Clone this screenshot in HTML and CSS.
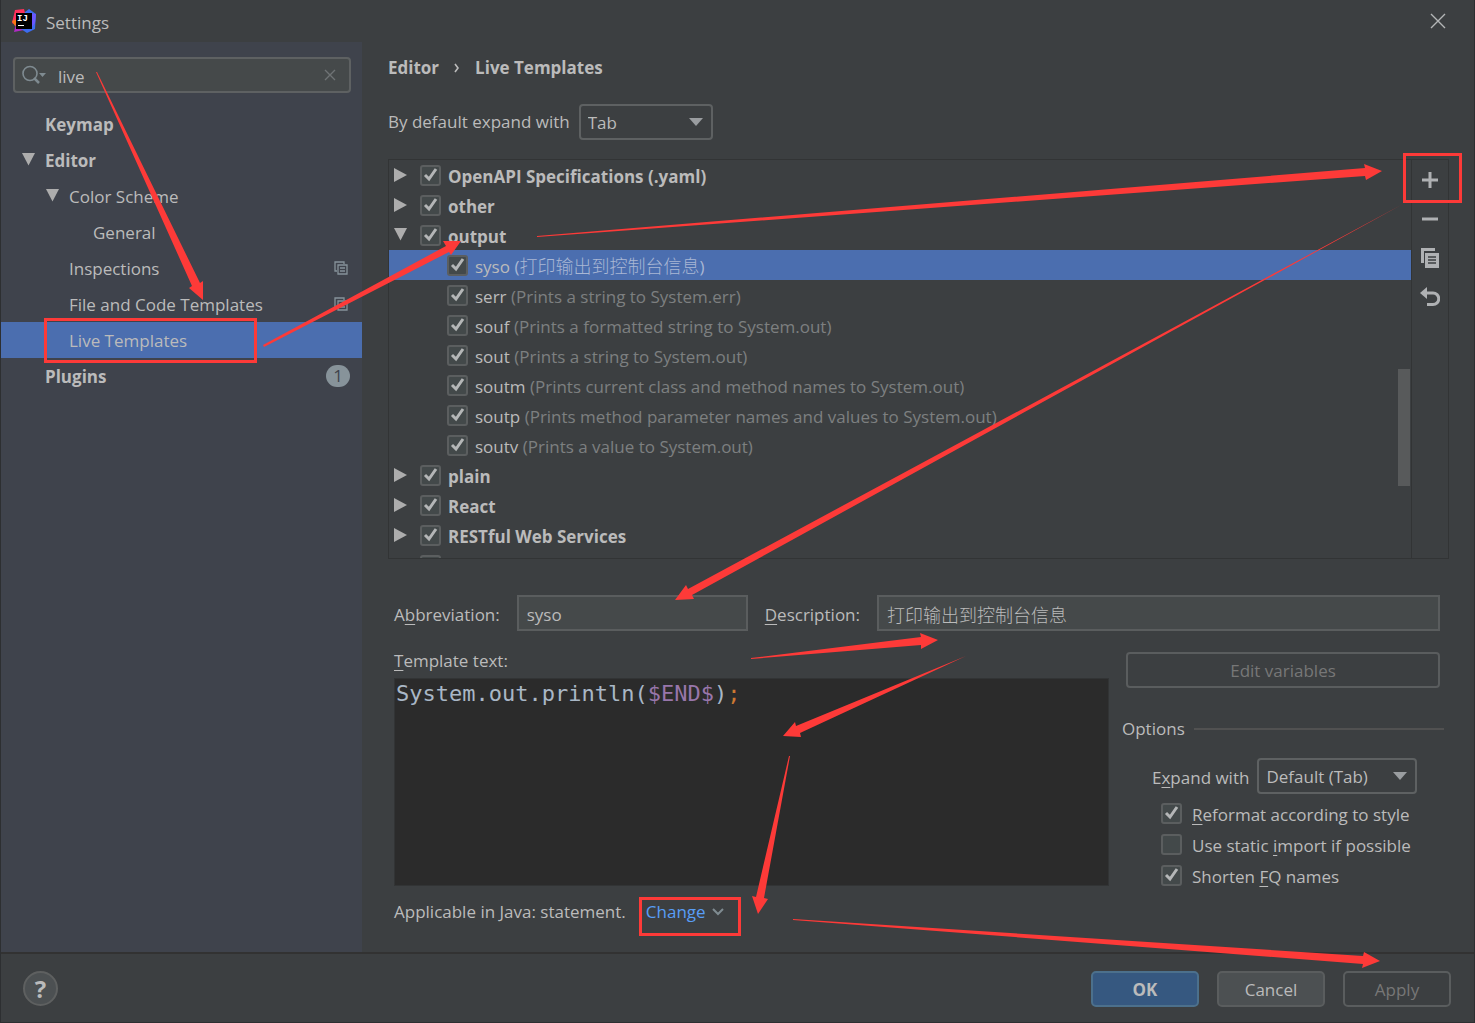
FILE: index.html
```html
<!DOCTYPE html>

<html lang="en">

<head>
  <meta charset="utf-8">
  <title>Settings</title>
  <link rel="stylesheet" href="styles.css">
</head>

<body>

  <div class="window">

    <header class="titlebar">
      <svg class="logo" width="24" height="24" viewBox="0 0 24 24">
        <polygon points="0,14 3,1 12,0 14,8 8,18" fill="#fe315d" />
        <polygon points="0,12 8,9 8,19 3,17" fill="#f97a12" />
        <polygon points="2,23 4,15 14,18 12,21" fill="#b02bc4" />
        <polygon points="13,3 17,0 24,5 23,20 15,24 9,20" fill="#3b6cf0" />
        <polygon points="17,4 24,5 23,14 20,18" fill="#6b57ff" />
        <rect x="4" y="4" width="16" height="16" fill="#000" />
        <text x="5" y="12" class="logo-text">IJ</text>
        <rect x="6" y="16" width="6" height="1" fill="#fff" />
      </svg>
      <h1>Settings</h1>
      <button class="close" aria-label="Close">
        <svg width="16" height="16" viewBox="0 0 16 16"><path d="M1 1L15 15M15 1L1 15" stroke="#b4b6b7" stroke-width="1.4" /></svg>
      </button>
    </header>

    <div class="content">

      <nav class="sidebar">
        <div class="search">
          <svg width="26" height="20" viewBox="0 0 26 20">
            <circle cx="8" cy="8.500" r="7" fill="none" stroke="#7f8b91" stroke-width="1.600" />
            <path d="M12 13L17 18" stroke="#7f8b91" stroke-width="2.500" />
            <path d="M17 8H24L20.500 12Z" fill="#7f8b91" />
          </svg>
          <input type="text" value="live" aria-label="Search settings">
          <button aria-label="Clear">
            <svg width="12" height="12" viewBox="0 0 12 12"><path d="M1 1L11 11M11 1L1 11" stroke="#6f7375" stroke-width="1.400" /></svg>
          </button>
        </div>

        <ul class="tree">
          <li><a href="#keymap" class="bold">Keymap</a></li>
          <li><span class="arrow open"></span><a href="#editor" class="bold">Editor</a></li>
          <li class="level2"><span class="arrow open"></span><a href="#colors">Color Scheme</a></li>
          <li class="level3"><a href="#general">General</a></li>
          <li class="level2"><a href="#inspections">Inspections</a>
            <svg class="scope" width="14" height="14" viewBox="0 0 14 14"><path d="M3 10H1V1H10V3M4 4H13V13H4ZM6 7H11M6 10H11" fill="none" stroke="#87939a" stroke-width="1.300" /></svg>
          </li>
          <li class="level2"><a href="#file-templates">File and Code Templates</a>
            <svg class="scope" width="14" height="14" viewBox="0 0 14 14"><path d="M3 10H1V1H10V3M4 4H13V13H4ZM6 7H11M6 10H11" fill="none" stroke="#87939a" stroke-width="1.300" /></svg>
          </li>
          <li class="level2 selected"><a href="#live-templates">Live Templates</a></li>
          <li><a href="#plugins" class="bold">Plugins</a><span class="badge">1</span></li>
        </ul>
      </nav>

      <main class="main">
        <h2 class="breadcrumb">
          Editor
          <svg width="6" height="10" viewBox="0 0 6 10"><path d="M1 1L4 5L1 9" fill="none" stroke="#bbb" stroke-width="1.600" /></svg>
          Live Templates
        </h2>

        <div class="expand">
          <label for="expand">By default expand with</label>
          <select id="expand">
            <option>Tab</option>
            <option>Enter</option>
            <option>Space</option>
          </select>
        </div>

        <div class="templates">
          <div class="list">
            <div class="row"><span class="arrow"></span><input type="checkbox" id="openapi" checked><label for="openapi">OpenAPI Specifications (.yaml)</label></div>
            <div class="row"><span class="arrow"></span><input type="checkbox" id="other" checked><label for="other">other</label></div>
            <div class="row"><span class="arrow open"></span><input type="checkbox" id="output" checked><label for="output">output</label></div>
            <div class="row child selected"><input type="checkbox" id="syso" checked><label for="syso">syso <span class="hint">(<span class="cjk">打印输出到控制台信息</span>)</span></label></div>
            <div class="row child"><input type="checkbox" id="serr" checked><label for="serr">serr <span class="hint">(Prints a string to System.err)</span></label></div>
            <div class="row child"><input type="checkbox" id="souf" checked><label for="souf">souf <span class="hint">(Prints a formatted string to System.out)</span></label></div>
            <div class="row child"><input type="checkbox" id="sout" checked><label for="sout">sout <span class="hint">(Prints a string to System.out)</span></label></div>
            <div class="row child"><input type="checkbox" id="soutm" checked><label for="soutm">soutm <span class="hint">(Prints current class and method names to System.out)</span></label></div>
            <div class="row child"><input type="checkbox" id="soutp" checked><label for="soutp">soutp <span class="hint">(Prints method parameter names and values to System.out)</span></label></div>
            <div class="row child"><input type="checkbox" id="soutv" checked><label for="soutv">soutv <span class="hint">(Prints a value to System.out)</span></label></div>
            <div class="row"><span class="arrow"></span><input type="checkbox" id="plain" checked><label for="plain">plain</label></div>
            <div class="row"><span class="arrow"></span><input type="checkbox" id="react" checked><label for="react">React</label></div>
            <div class="row"><span class="arrow"></span><input type="checkbox" id="restful" checked><label for="restful">RESTful Web Services</label></div>
            <div class="row"><span class="arrow"></span><input type="checkbox" aria-label="Next group" checked></div>
            <div class="thumb"></div>
          </div>
          <div class="tools">
            <button aria-label="Add"><svg width="20" height="20" viewBox="0 0 20 20"><path d="M10 2V18M2 10H18" stroke="#afb1b3" stroke-width="3" /></svg></button>
            <button aria-label="Remove"><svg width="20" height="20" viewBox="0 0 20 20"><path d="M2 10H18" stroke="#afb1b3" stroke-width="3" /></svg></button>
            <button aria-label="Duplicate"><svg width="20" height="20" viewBox="0 0 20 20"><path d="M1 0H15V3H4V15H1Z" fill="#afb1b3" /><path d="M5 5H19V20H5Z" fill="#afb1b3" /><path d="M8 9H16M8 12H16M8 15H16" stroke="#3c3f41" stroke-width="1.300" /></svg></button>
            <button aria-label="Revert"><svg width="20" height="20" viewBox="0 0 20 20"><path d="M0 6L7 0V12Z" fill="#afb1b3" /><path d="M6 6H13A5.500 5.500 0 0 1 13 17.500H7" fill="none" stroke="#afb1b3" stroke-width="3" /></svg></button>
          </div>
        </div>

        <form class="details">
          <div class="fields">
            <label for="abbr">A<u>b</u>breviation:</label>
            <input type="text" id="abbr" class="abbr" value="syso">
            <label for="desc"><u>D</u>escription:</label>
            <input type="text" id="desc" class="desc" value="打印输出到控制台信息">
          </div>

          <div class="columns">
            <div class="template">
              <span id="text-label"><u>T</u>emplate text:</span>
              <div class="code" contenteditable="true" role="textbox" aria-labelledby="text-label">System.out.println(<span class="var">$END$</span>)<span class="semi">;</span></div>
              <div class="context">
                <span>Applicable in Java: statement.</span>
                <a href="#change">Change
                  <svg width="12" height="8" viewBox="0 0 12 8"><path d="M1 1L6 6L11 1" fill="none" stroke="#7f8b91" stroke-width="2" /></svg></a>
              </div>
            </div>

            <div class="side">
              <button type="button" class="variables" disabled>Edit variables</button>
              <fieldset class="options">
                <legend>Options</legend>
                <div class="option expand-with">
                  <label for="key">E<u>x</u>pand with</label>
                  <select id="key">
                    <option>Default (Tab)</option>
                  </select>
                </div>
                <div class="option"><input type="checkbox" id="reformat" checked><label for="reformat"><u>R</u>eformat according to style</label></div>
                <div class="option"><input type="checkbox" id="static"><label for="static">Use static <u>i</u>mport if possible</label></div>
                <div class="option"><input type="checkbox" id="fq" checked><label for="fq">Shorten <u>F</u>Q names</label></div>
              </fieldset>
            </div>
          </div>
        </form>
      </main>
    </div>

    <footer class="footer">
      <button class="help" aria-label="Help">?</button>
      <button class="action primary">OK</button>
      <button class="action">Cancel</button>
      <button class="action" disabled>Apply</button>
    </footer>

    <!-- red arrows and boxes showing the order of steps -->
    <svg class="marks" viewBox="0 0 1475 1023" preserveAspectRatio="none">
      <g fill="#fd3a38">
        <polygon points="96,72 192,286 189,288 203,300 203,281 200,283 97,72" />
        <polygon points="263,345 446,246 443,241 461,241 451,255 449,252 264,347" />
        <polygon points="537,236 1365,168 1364,164 1382,171 1366,180 1365,176 537,237" />
        <polygon points="1403,204 688,589 686,585 675,600 694,599 692,595" />
        <polygon points="751,658 921,637 920,633 938,640 921,649 921,645 751,659" />
        <polygon points="966,656 796,726 795,722 783,736 801,737 800,733" />
        <polygon points="789,756 756,897 752,896 758,914 768,899 764,898 790,756" />
        <polygon points="793,919 1363,956 1364,952 1380,961 1362,968 1363,964 793,920" />
      </g>
      <g fill="none" stroke="#fd3a38" stroke-width="3">
        <rect x="45.500" y="319.500" width="210" height="42" />
        <rect x="1404.500" y="154.500" width="56" height="47" />
        <rect x="640.500" y="898.500" width="99" height="36" />
      </g>
    </svg>
  </div>

</body>

</html>
```

FILE: styles.css
```css
* {
  box-sizing: border-box;
}

body {
  margin: 0;
  background-color: #3c3f41;
  color: #bbbbbb;
  font-family: "Open Sans", "Noto Sans CJK SC", sans-serif;
  font-size: 17px;
  line-height: 24px;
}

h1,
h2,
ul,
fieldset,
legend {
  margin: 0;
  padding: 0;
}

a {
  color: inherit;
  text-decoration: none;
}

u {
  text-underline-offset: 3px;
}

svg {
  display: block;
  flex: none;
}

button,
input,
select {
  margin: 0;
  color: inherit;
  font: inherit;
}

button {
  padding: 0;
  border: 0;
  background: none;
}

input[type="text"] {
  height: 36px;
  padding: 2px 8px 0;
  border: 2px solid #5a5d5e;
  background-color: #45494a;
  outline: 0;
}

input[type="checkbox"] {
  appearance: none;
  flex: none;
  width: 21px;
  height: 21px;
  border: 2px solid #5b5e5f;
  border-radius: 3px;
  background-color: #43494a;
}

input[type="checkbox"]:checked {
  background-image: url("data:image/svg+xml,%3Csvg xmlns='http://www.w3.org/2000/svg' viewBox='0 0 17 17'%3E%3Cpath d='M3 8L7 12L14 2' fill='none' stroke='%23b4b6b7' stroke-width='3'/%3E%3C/svg%3E");
}

select {
  appearance: none;
  height: 36px;
  padding: 1px 7px 0;
  border: 2px solid #5e6162;
  border-radius: 4px;
  background: #3c3f41 url("data:image/svg+xml,%3Csvg xmlns='http://www.w3.org/2000/svg' width='14' height='8'%3E%3Cpath d='M0 0H14L7 8Z' fill='%239a9da0'/%3E%3C/svg%3E") no-repeat right 8px center;
}

.window {
  position: relative;
  display: flex;
  flex-direction: column;
  min-height: 100vh;
  border: 1px solid #2d2f31;
  border-top: 0;
}

.titlebar {
  display: flex;
  align-items: center;
  gap: 10px;
  height: 42px;
  padding: 0 28px 0 11px;
}

.titlebar h1 {
  flex: 1;
  padding-top: 4px;
  font-size: 17px;
  font-weight: normal;
}

.logo-text {
  fill: #fff;
  font-family: "Liberation Mono", monospace;
  font-size: 9px;
  font-weight: bold;
}

.content {
  display: flex;
  flex: 1;
}

.sidebar {
  width: 361px;
  flex: none;
  padding-top: 15px;
  background-color: #3f434c;
}

.search {
  display: flex;
  align-items: center;
  height: 36px;
  margin: 0 11px 13px 12px;
  padding: 0 13px 0 7px;
  border: 2px solid #5e6162;
  border-radius: 4px;
  background-color: #45494a;
}

.search input[type="text"] {
  flex: 1;
  min-width: 0;
  height: 32px;
  padding: 2px 10px 0;
  border: 0;
  background: none;
}

.tree {
  list-style: none;
}

.tree li {
  display: flex;
  align-items: center;
  height: 36px;
  padding: 0 14px 0 44px;
}

.tree a {
  flex: 1;
  padding-top: 1px;
}

.tree .level2 {
  padding-left: 68px;
}

.tree .level3 {
  padding-left: 92px;
}

.tree .arrow {
  margin-left: -23px;
  margin-right: 10px;
}

.bold {
  font-weight: bold;
}

.selected {
  background-color: #4b6eaf;
}

.arrow {
  flex: none;
  width: 13px;
  height: 14px;
  background-color: #adadad;
  clip-path: polygon(0 0, 100% 50%, 0 100%);
}

.arrow.open {
  clip-path: polygon(0 0, 100% 0, 50% 90%);
}

.badge {
  width: 24px;
  height: 22px;
  margin-right: -2px;
  border-radius: 11px;
  background-color: #87939a;
  color: #3f434c;
  line-height: 22px;
  text-align: center;
}

.main {
  flex: 1;
  min-width: 0;
  padding: 14px 25px 0 26px;
}

.breadcrumb {
  display: flex;
  align-items: center;
  gap: 15px;
  font-size: 17px;
}

.expand {
  display: flex;
  align-items: center;
  gap: 9px;
  margin: 24px 0 19px;
}

.expand select {
  width: 134px;
}

.templates {
  display: flex;
  height: 400px;
  border: 1px solid #323435;
}

.list {
  position: relative;
  flex: 1;
  overflow: hidden;
}

.row {
  display: flex;
  align-items: center;
  height: 30px;
  padding-left: 5px;
  font-weight: bold;
}

.row .arrow {
  margin-right: 13px;
}

.row label {
  padding: 3px 0 0 7px;
}

.child {
  padding-left: 58px;
  font-weight: normal;
}

.hint {
  color: #7d7f80;
}

.selected .hint {
  color: #a9b7d4;
}

.cjk {
  font-size: 18px;
  font-weight: 300;
}

.thumb {
  position: absolute;
  top: 209px;
  right: 1px;
  width: 12px;
  height: 117px;
  background-color: #585a5b;
}

.tools {
  display: flex;
  flex-direction: column;
  gap: 19px;
  width: 37px;
  padding: 10px 8px;
  border-left: 1px solid #323435;
}

.details {
  padding: 36px 9px 0 6px;
}

.fields {
  display: flex;
  align-items: center;
  gap: 17px;
}

.fields label {
  padding-top: 3px;
}

.abbr {
  width: 231px;
}

.desc {
  flex: 1;
  min-width: 0;
}

.fields .desc {
  font-size: 18px;
  font-weight: 300;
}

.columns {
  display: flex;
  gap: 13px;
  padding-top: 18px;
}

.template {
  flex: 1;
  min-width: 0;
}

.code {
  height: 208px;
  margin: 5px 0 14px;
  padding: 0 1px;
  border: 1px solid #323435;
  background-color: #2b2b2b;
  color: #a9b7c6;
  font-family: "DejaVu Sans Mono", monospace;
  font-size: 22px;
  line-height: 30px;
  outline: 0;
}

.var {
  color: #9876aa;
}

.semi {
  color: #cc7832;
}

.context {
  display: flex;
  gap: 20px;
}

.context a {
  display: flex;
  align-items: center;
  gap: 6px;
  color: #589df6;
}

.side {
  width: 318px;
  padding-top: 3px;
}

.variables {
  display: block;
  width: 314px;
  height: 36px;
  margin-left: 4px;
  padding-top: 2px;
  border: 2px solid #5a5d5e;
  border-radius: 4px;
  color: #777777;
}

.options {
  margin: 29px -4px 0 0;
  border: 0;
}

.options legend {
  display: flex;
  align-items: center;
  gap: 9px;
  width: 100%;
  margin-bottom: 17px;
}

.options legend::after {
  content: "";
  flex: 1;
  height: 2px;
  background-color: #515151;
}

.option {
  display: flex;
  align-items: center;
  gap: 10px;
  height: 31px;
  padding-left: 39px;
}

.option label {
  padding-top: 3px;
}

.expand-with {
  gap: 8px;
  height: 36px;
  margin-bottom: 4px;
  padding-left: 30px;
}

.expand-with select {
  width: 160px;
}

.footer {
  display: flex;
  align-items: center;
  gap: 18px;
  height: 70px;
  padding: 1px 23px 0 22px;
  border-top: 2px solid #323232;
}

.help {
  width: 35px;
  height: 35px;
  margin-right: auto;
  border: 2px solid #5e6060;
  border-radius: 50%;
  background-color: #4c5052;
  font-size: 24px;
  font-weight: bold;
}

.action {
  width: 108px;
  height: 36px;
  padding-top: 2px;
  border: 2px solid #5a5d5e;
  border-radius: 5px;
  background-color: #4c5052;
}

.action:disabled {
  background: none;
  color: #777777;
}

.primary {
  border-color: #4c708c;
  background-color: #365880;
  font-weight: bold;
}

.marks {
  position: absolute;
  top: 0;
  left: -1px;
  width: 100vw;
  height: 100vh;
  pointer-events: none;
}
```
